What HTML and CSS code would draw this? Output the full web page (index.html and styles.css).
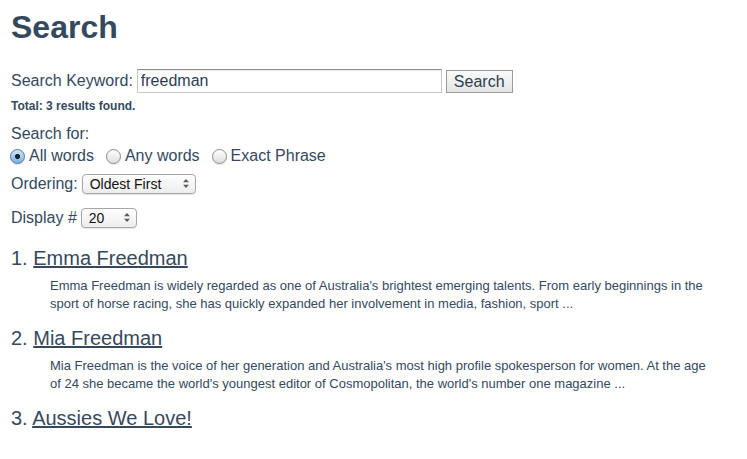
FILE: index.html
```html
<!DOCTYPE html>
<html lang="en">
<head>
<meta charset="utf-8">
<title>Search</title>
<link rel="stylesheet" href="styles.css">
</head>
<body>
<h1 class="title">Search</h1>
<form class="search-form">
  <div class="keyword-row">
    <label class="label" for="kw">Search Keyword:</label>
    <input class="keyword-input" id="kw" type="text" value="freedman">
    <button class="search-btn" type="button">Search</button>
  </div>
  <p class="total">Total: 3 results found.</p>
  <div class="label-line">Search for:</div>
  <div class="radio-row">
    <label class="radio-opt"><input class="radio" type="radio" name="mode" checked><span>All words</span></label>
    <label class="radio-opt"><input class="radio" type="radio" name="mode"><span>Any words</span></label>
    <label class="radio-opt"><input class="radio" type="radio" name="mode"><span>Exact Phrase</span></label>
  </div>
  <div class="select-row ordering-row">
    <span class="label">Ordering:</span>
    <span class="select-wrap">
      <select class="select select-order"><option>Oldest First</option></select>
      <svg class="arrows" width="6" height="9" viewBox="0 0 6 9"><path d="M3 0 L6 3.3 H0 Z M3 9 L6 5.7 H0 Z" fill="#5a5a5a"/></svg>
    </span>
  </div>
  <div class="select-row display-row">
    <span class="label">Display #</span>
    <span class="select-wrap">
      <select class="select select-display"><option>20</option></select>
      <svg class="arrows" width="6" height="9" viewBox="0 0 6 9"><path d="M3 0 L6 3.3 H0 Z M3 9 L6 5.7 H0 Z" fill="#5a5a5a"/></svg>
    </span>
  </div>
</form>
<ol class="results">
  <li class="result">
    <h3 class="result-title">1. <a class="result-link" href="#">Emma Freedman</a></h3>
    <p class="result-desc">Emma Freedman is widely regarded as one of Australia's brightest emerging talents. From early beginnings in the sport of horse racing, she has quickly expanded her involvement in media, fashion, sport ...</p>
  </li>
  <li class="result">
    <h3 class="result-title">2. <a class="result-link" href="#">Mia Freedman</a></h3>
    <p class="result-desc">Mia Freedman is the voice of her generation and Australia's most high profile spokesperson for women. At the age of 24 she became the world's youngest editor of Cosmopolitan, the world's number one magazine ...</p>
  </li>
  <li class="result">
    <h3 class="result-title">3. <a class="result-link" href="#">Aussies We Love!</a></h3>
  </li>
</ol>
</body>
</html>
```
FILE: styles.css
```css
html, body {
  margin: 0;
  background: #ffffff;
}
body {
  padding: 7px 0 0 11px;
  font-family: "Liberation Sans", Arial, Helvetica, sans-serif;
  color: #34495e;
  font-size: 16px;
}
.title {
  margin: 0;
  font-size: 32px;
  line-height: 40px;
  font-weight: bold;
  color: #34495e;
}
.search-form {
  margin: 0;
}
.keyword-row {
  margin-top: 22px;
  display: flex;
  align-items: center;
  height: 24px;
}
.label {
  font-size: 16px;
  line-height: 20px;
}
.keyword-input {
  margin: 0 0 0 4px;
  box-sizing: border-box;
  width: 305px;
  height: 24px;
  padding: 0 3px;
  border: 1px solid #c9c9c9;
  border-top-color: #8e8e8e;
  box-shadow: inset 0 1px 1px rgba(0,0,0,0.08);
  font-family: inherit;
  font-size: 16px;
  color: #2c3e50;
  outline: none;
}
.search-btn {
  margin: 1px 0 0 4px;
  box-sizing: border-box;
  height: 23px;
  padding: 0 7px;
  border: 1px solid #9a9a9a;
  border-radius: 0;
  background: linear-gradient(#fbfbfb, #e4e4e4);
  font-family: inherit;
  font-size: 16px;
  line-height: 20px;
  color: #2c3e50;
}
.total {
  margin: 6px 0 0;
  font-size: 12px;
  line-height: 14px;
  font-weight: bold;
}
.label-line {
  margin-top: 11px;
  line-height: 20px;
}
.radio-row {
  margin-top: 2px;
  margin-left: -1px;
  display: flex;
  align-items: center;
  gap: 12px;
  height: 20px;
}
.radio-opt {
  display: flex;
  align-items: center;
  gap: 4px;
  line-height: 20px;
}
.radio {
  appearance: none;
  -webkit-appearance: none;
  margin: 0;
  width: 15px;
  height: 15px;
  box-sizing: border-box;
  border-radius: 50%;
  border: 1px solid #8c8c8c;
  background: linear-gradient(#ffffff, #dedede);
  box-shadow: 0 1px 1px rgba(0,0,0,0.12);
}
.radio:checked {
  border-color: #4f76a3;
  background:
    radial-gradient(circle, #1a2530 0 2.2px, transparent 2.9px),
    linear-gradient(#cfe6fb, #7fb1e3);
}
.select-row {
  display: flex;
  align-items: center;
  gap: 4px;
  height: 20px;
}
.ordering-row {
  margin-top: 8px;
}
.display-row {
  margin-top: 14px;
}
.select-wrap {
  position: relative;
  display: flex;
}
.select {
  appearance: none;
  -webkit-appearance: none;
  margin: 0;
  box-sizing: border-box;
  height: 20px;
  padding: 0 0 0 7px;
  border: 1px solid #a6a6a6;
  border-radius: 4px;
  background: linear-gradient(#ffffff, #ededed);
  box-shadow: 0 1px 1px rgba(0,0,0,0.1);
  font-family: "Liberation Sans", Arial, sans-serif;
  font-size: 14px;
  color: #111;
  outline: none;
}
.select-order {
  width: 114px;
}
.select-display {
  width: 56px;
}
.arrows {
  position: absolute;
  right: 7px;
  top: 5px;
  pointer-events: none;
}
.results {
  list-style: none;
  margin: 18px 0 0;
  padding: 0;
}
.result + .result {
  margin-top: 13px;
}
.result-title {
  margin: 0;
  font-size: 20px;
  line-height: 24px;
  font-weight: normal;
}
.result-link {
  color: #34495e;
  text-decoration: underline;
}
.result-desc {
  margin: 7px 0 0;
  padding-left: 39px;
  max-width: 662px;
  font-size: 13px;
  line-height: 18px;
}
```
